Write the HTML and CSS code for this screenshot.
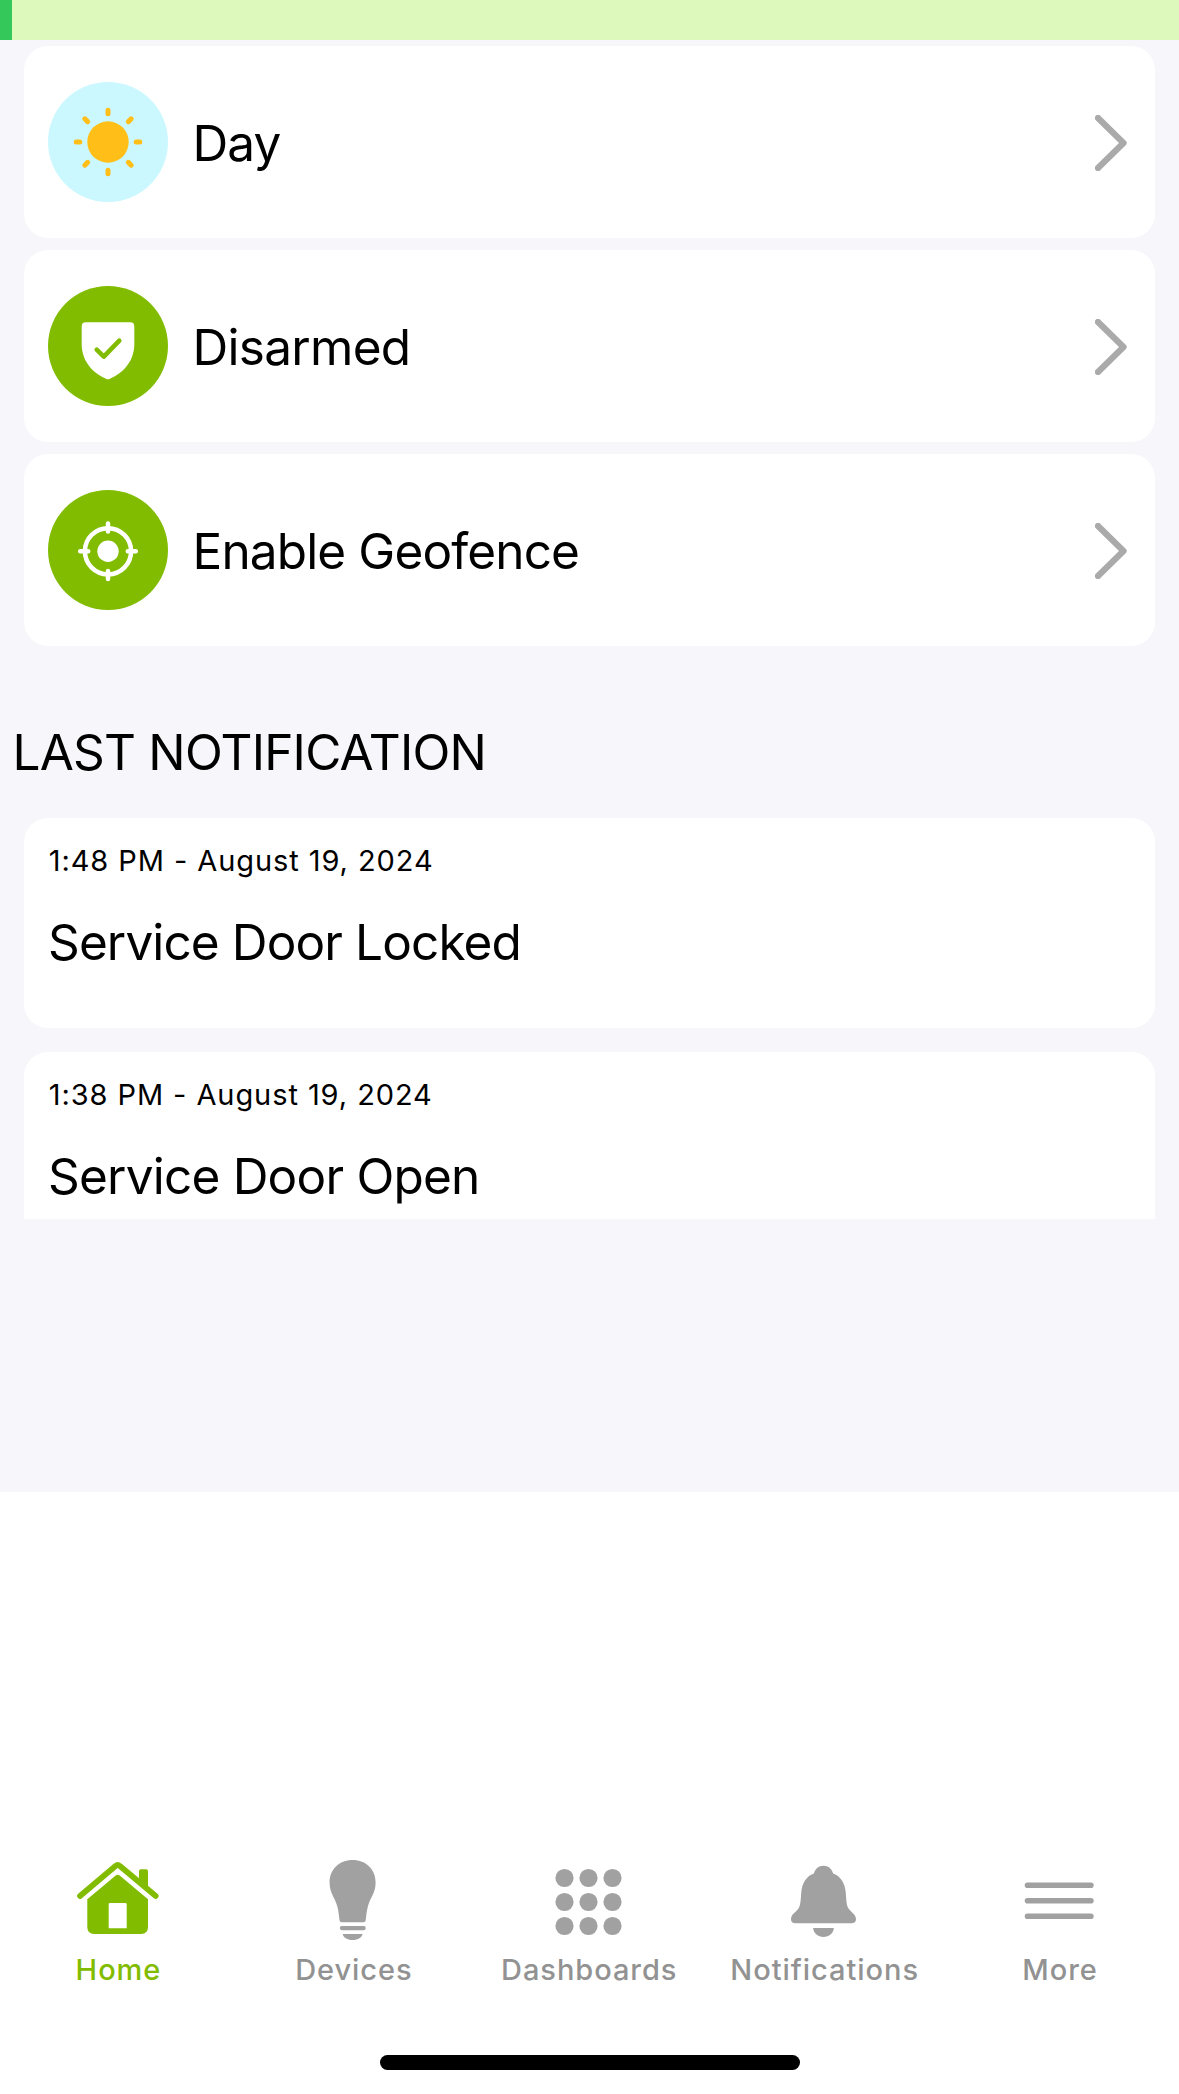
FILE: index.html
```html
<!DOCTYPE html>
<html lang="en">
<head>
<meta charset="utf-8">
<title>Home</title>
<link rel="stylesheet" href="styles.css">
</head>
<body>
<main class="content">
  <div class="banner"></div>

  <section class="modes">
    <a class="mode">
      <svg class="mode-icon" viewBox="0 0 120 120">
        <circle cx="60" cy="60" r="60" fill="#cbf8ff"/>
        <circle cx="60" cy="60" r="20.7" fill="#ffbe18"/>
        <g stroke="#ffbe18" stroke-width="5" stroke-linecap="round">
          <path d="M60 28.200v3.600M60 88.200v3.600M28.200 60h3.600M88.200 60h3.600"/>
          <path d="M60 27.200v4M60 88.800v4M27.200 60h4M88.800 60h4" transform="rotate(45 60 60)"/>
        </g>
      </svg>
      <span class="mode-label">Day</span>
      <svg class="chevron" viewBox="0 0 32 56"><path d="M3 3L28.500 28L3 53"/></svg>
    </a>
    <a class="mode">
      <svg class="mode-icon" viewBox="0 0 120 120">
        <circle cx="60" cy="60" r="60" fill="#82bc00"/>
        <path d="M37.700 36.300H82.300Q86.300 36.300 86.300 40.300V58C86.300 75 75.500 87 62 92.700Q60 93.700 58 92.700C44.500 87 33.700 75 33.700 58V40.300Q33.700 36.300 37.700 36.300Z" fill="#fff"/>
        <path d="M48.700 63.700L55.800 70.600L71.300 54.600" fill="none" stroke="#82bc00" stroke-width="4.600" stroke-linecap="round" stroke-linejoin="round"/>
      </svg>
      <span class="mode-label mode-label-disarmed">Disarmed</span>
      <svg class="chevron" viewBox="0 0 32 56"><path d="M3 3L28.500 28L3 53"/></svg>
    </a>
    <a class="mode">
      <svg class="mode-icon" viewBox="0 0 120 120">
        <circle cx="60" cy="60" r="60" fill="#82bc00"/>
        <circle cx="60" cy="61.300" r="10.700" fill="#fff"/>
        <g fill="none" stroke="#fff" stroke-width="4.500" stroke-linecap="round">
          <circle cx="60" cy="61.300" r="23.100"/>
          <path d="M60 33.500v8M60 81.100v8M32.200 61.300h8M79.800 61.300h8"/>
        </g>
      </svg>
      <span class="mode-label">Enable Geofence</span>
      <svg class="chevron" viewBox="0 0 32 56"><path d="M3 3L28.500 28L3 53"/></svg>
    </a>
  </section>

  <h2 class="heading">LAST NOTIFICATION</h2>

  <section class="notices">
    <article class="notice">
      <time class="notice-time">1:48 PM - August 19, 2024</time>
      <p class="notice-title">Service Door Locked</p>
    </article>
    <article class="notice">
      <time class="notice-time">1:38 PM - August 19, 2024</time>
      <p class="notice-title notice-title-open">Service Door Open</p>
    </article>
  </section>
</main>

<nav class="tabs">
  <a class="tab tab-active">
    <svg class="tab-icon" viewBox="0 0 90 90">
      <path d="M7 41L42.500 11Q44.700 9 46.900 11L82.700 41" fill="none" stroke="currentColor" stroke-width="5.700" stroke-linecap="round" stroke-linejoin="round"/>
      <path d="M66 26V16.300Q66 14.300 68 14.300H73Q75 14.300 75 16.300V35Z"/>
      <path fill-rule="evenodd" d="M14.300 44.300L42.700 20.600Q44.700 19 46.700 20.600L75 44.300V72Q75 79 68 79H21.300Q14.300 79 14.300 72ZM37 48Q35.700 48 35.700 49.300V73.300H53.700V49.300Q53.700 48 52.400 48Z"/>
    </svg>
    <span class="tab-label">Home</span>
  </a>
  <a class="tab">
    <svg class="tab-icon" viewBox="0 0 90 90">
      <path d="M44.600 5C31 5 21.600 14.500 21.600 27.500C21.600 38 26.500 41.500 29.200 51C30.600 56 31 61 31.500 65.300Q31.700 67.300 33.600 67.300H55.600Q57.500 67.300 57.700 65.300C58.200 61 58.600 56 60 51C62.700 41.500 67.600 38 67.600 27.500C67.600 14.500 58.200 5 44.600 5Z"/>
      <rect x="31.800" y="71" width="26" height="4.200" rx="2.100"/>
      <path d="M34.600 79H54.600C53.800 82.500 50 85 44.600 85S35.400 82.500 34.600 79Z"/>
    </svg>
    <span class="tab-label">Devices</span>
  </a>
  <a class="tab">
    <svg class="tab-icon" viewBox="0 0 90 90">
      <circle cx="21.500" cy="23" r="9.100"/><circle cx="45.500" cy="23" r="9.100"/><circle cx="69.500" cy="23" r="9.100"/>
      <circle cx="21.500" cy="47" r="9.100"/><circle cx="45.500" cy="47" r="9.100"/><circle cx="69.500" cy="47" r="9.100"/>
      <circle cx="21.500" cy="71" r="9.100"/><circle cx="45.500" cy="71" r="9.100"/><circle cx="69.500" cy="71" r="9.100"/>
    </svg>
    <span class="tab-label">Dashboards</span>
  </a>
  <a class="tab">
    <svg class="tab-icon" viewBox="0 0 90 90">
      <path d="M34.900 18.500C36.300 13.500 39.500 10.700 44.500 10.700S52.700 13.500 54.100 18.500C62.500 21.500 66.100 29.500 66.700 37C67.300 44 67.200 50 69.500 53.500C72 57 77 59.500 77 64Q77 68.300 72.300 68.300H16.700Q12 68.300 12 64C12 59.500 17 57 19.500 53.500C21.800 50 21.700 44 22.300 37C22.900 29.500 26.500 21.500 34.900 18.500Z"/>
      <path d="M34.100 73H54.900C54.300 78.500 50 82 44.500 82S34.700 78.500 34.100 73Z"/>
    </svg>
    <span class="tab-label">Notifications</span>
  </a>
  <a class="tab">
    <svg class="tab-icon" viewBox="0 0 90 90">
      <path d="M13.500 30.300H76.900M13.500 45.700H76.900M13.500 61.300H76.900" stroke="currentColor" stroke-width="5.600" stroke-linecap="round"/>
    </svg>
    <span class="tab-label">More</span>
  </a>
</nav>
<div class="home-indicator"></div>
</body>
</html>
```
FILE: styles.css
```css
* {
  box-sizing: border-box;
}

body {
  margin: 0;
  height: 2094px;
  display: flex;
  flex-direction: column;
  overflow: hidden;
  background: #fff;
  color: #000;
  font-family: Inter, "Liberation Sans", sans-serif;
}

.content {
  height: 1492px;
  background: #f6f6fb;
}

.banner {
  height: 40px;
  border-left: 12px solid #34c759;
  background: #ddf9bb;
}

.modes {
  display: flex;
  flex-direction: column;
  gap: 12px;
  padding: 6px 24px 0;
}

.mode {
  display: flex;
  align-items: center;
  height: 192px;
  padding: 0 28px 0 24px;
  border-radius: 24px;
  background: #fff;
}

.mode-icon {
  width: 120px;
  height: 120px;
}

.mode-label {
  flex: 1;
  padding: 2px 0 0 24.5px;
  font-size: 49.5px;
  line-height: 60px;
  letter-spacing: -0.86px;
}

.mode-label-disarmed {
  letter-spacing: -0.7px;
}

.chevron {
  width: 32px;
  height: 56px;
  margin-top: 2px;
  fill: none;
  stroke: #aaa;
  stroke-width: 6.3px;
  stroke-linecap: round;
  stroke-linejoin: round;
}

.heading {
  margin: 76px 0 0;
  padding-left: 12.5px;
  font-size: 49.5px;
  font-weight: 400;
  line-height: 60px;
  letter-spacing: -0.78px;
}

.notices {
  display: flex;
  flex-direction: column;
  gap: 24px;
  height: 437px;
  padding: 36px 24px 0;
  overflow: hidden;
}

.notice {
  flex: none;
  height: 210px;
  padding: 24px;
  border-radius: 24px;
  background: #fff;
}

.notice-time {
  display: block;
  padding-left: 0.7px;
  font-size: 29px;
  line-height: 37px;
  letter-spacing: 0.92px;
}

.notice-title {
  margin: 33px 0 0;
  font-size: 49.5px;
  line-height: 60px;
  letter-spacing: -0.88px;
}

.notice-title-open {
  letter-spacing: -0.78px;
}

.tabs {
  display: grid;
  grid-template-columns: repeat(5, 1fr);
  width: 1177px;
  padding-top: 363px;
}

.tab {
  display: flex;
  flex-direction: column;
  align-items: center;
  color: #929292;
}

.tab-icon {
  width: 90px;
  height: 90px;
  color: #a1a1a1;
  fill: currentColor;
}

.tab-label {
  margin-top: 7px;
  padding-left: 1.5px;
  font-size: 29px;
  font-weight: 500;
  line-height: 36px;
  letter-spacing: 0.95px;
}

.tab-active,
.tab-active .tab-icon {
  color: #82bc00;
}

.home-indicator {
  width: 420px;
  height: 15px;
  margin: 67px auto 0;
  border-radius: 8px;
  background: #000;
}
```
